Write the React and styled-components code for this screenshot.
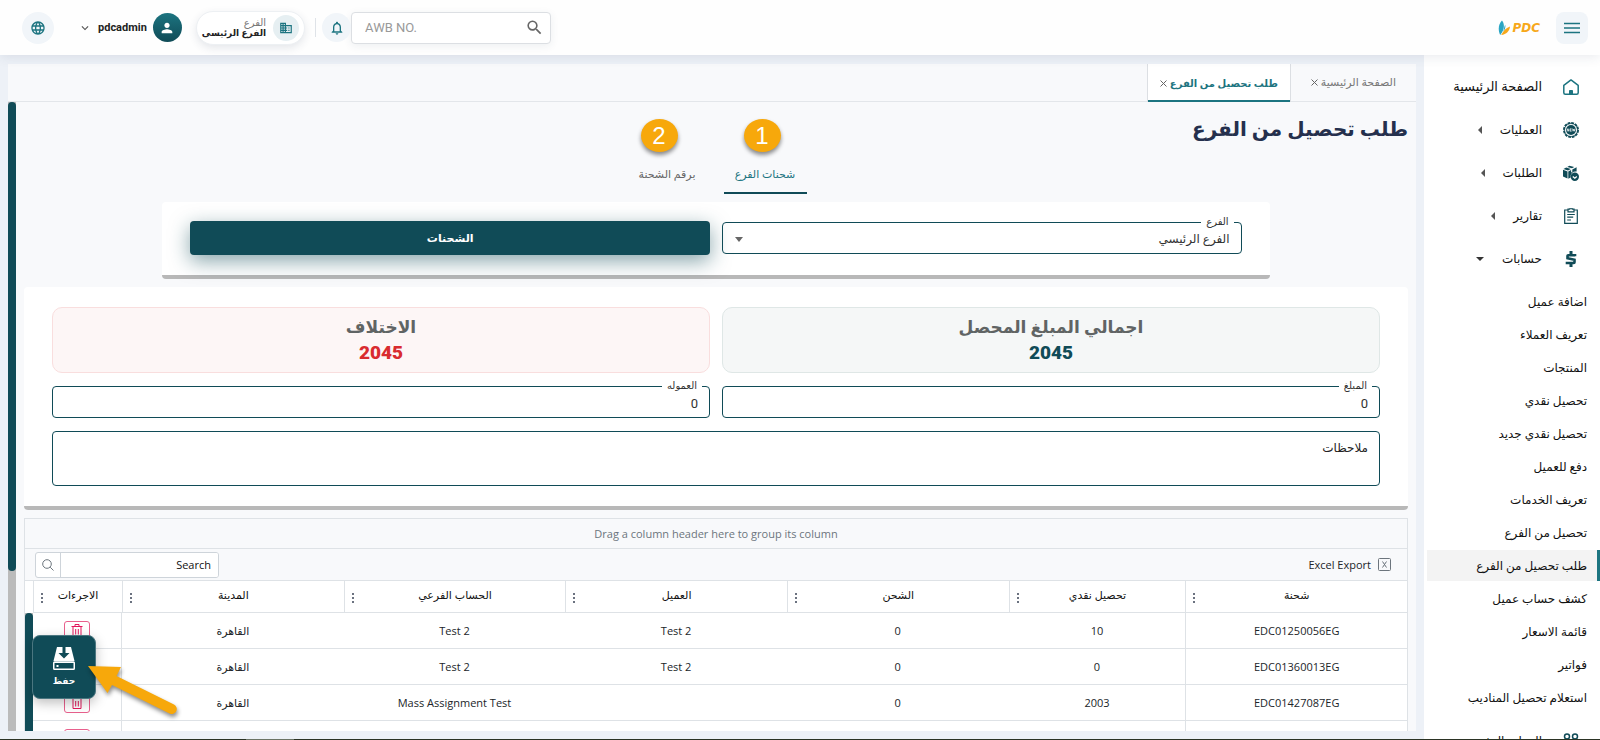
import React from "react";
import styled, { createGlobalStyle, css } from "styled-components";
import {
  MdLanguage,
  MdPerson,
  MdBusiness,
  MdNotificationsNone,
  MdSearch,
  MdKeyboardArrowDown,
} from "react-icons/md";

const arabic = `Roboto, "DejaVu Sans", sans-serif`;
const gridFont = `"Open Sans", "DejaVu Sans", sans-serif`;
const primary = "#104b57";
const accent = "#1c7480";
const line = "#dee2e6";

const GlobalStyle = createGlobalStyle`
  *, *::before, *::after { box-sizing: border-box; }
  body { margin: 0; background: #edf1f7; font-family: ${arabic}; color: #212529; }
  button, input, select, textarea { font-family: inherit; color: inherit; margin: 0; }
  a { color: inherit; text-decoration: none; }
`;

/* ---------- shell ---------- */

const Shell = styled.div`
  height: 100vh;
  display: flex;
  flex-direction: column;
  overflow: hidden;
`;

const Body = styled.div`
  flex: 1;
  min-height: 0;
  display: flex;
`;

const TaskStrip = styled.footer`
  height: 1px;
  flex: none;
  background: linear-gradient(90deg, #2b3324 0 15.4%, #6b7465 15.4% 18.4%, #2b3324 18.4%);
`;

/* ---------- top bar ---------- */

const TopBar = styled.header`
  flex: none;
  height: 55px;
  padding: 0 12px 0 22px;
  display: flex;
  align-items: center;
  background: #fefefe;
  box-shadow: 0 1px 12px rgba(40, 60, 90, 0.12);
  z-index: 2;
`;

const SquareButton = styled.button`
  width: 32px;
  height: 32px;
  padding: 0;
  border: 0;
  border-radius: 8px;
  background: #f1f5f9;
  color: ${accent};
  display: grid;
  place-items: center;
`;

const RoundButton = styled(SquareButton)`
  width: ${(p) => p.$size}px;
  height: ${(p) => p.$size}px;
  border-radius: 50%;
`;

const Logo = styled.a`
  display: flex;
  align-items: center;
  gap: 1px;
  margin-right: 16px;
  direction: ltr;
  color: #f7a81b;
  font: italic bold 12px/16px "DejaVu Sans", sans-serif;
`;

const Spacer = styled.div`
  flex: 1;
`;

const SearchBox = styled.label`
  width: 200px;
  height: 32px;
  padding: 0 6px 0 13px;
  display: flex;
  align-items: center;
  direction: ltr;
  border: 1px solid #dcdfe3;
  border-radius: 4px;
  background: #fff;
  box-shadow: 0 2px 8px rgba(40, 60, 90, 0.08);
  color: #666;

  input {
    flex: 1;
    min-width: 0;
    padding: 0;
    border: 0;
    outline: 0;
    background: none;
    font-size: 13px;
  }
  input::placeholder { color: #999; opacity: 1; }
`;

const Divider = styled.span`
  width: 1px;
  height: 19px;
  margin: 0 6px 0 10px;
  background: #dfe3e8;
`;

const BranchPill = styled.button`
  height: 34px;
  padding: 0 5px;
  display: flex;
  align-items: center;
  gap: 7px;
  border: 1px solid #edf0f3;
  border-radius: 17px;
  background: #fff;
  box-shadow: 0 3px 8px rgba(40, 60, 90, 0.12);
  text-align: right;
`;

const PillIcon = styled.span`
  width: 26px;
  height: 26px;
  border-radius: 50%;
  background: #e6eff2;
  color: ${accent};
  display: grid;
  place-items: center;
`;

const PillText = styled.span`
  display: grid;
  font-size: 10px;
  line-height: 11px;
  color: #777;
  white-space: nowrap;

  strong {
    font-size: 9px;
    color: #222;
  }
`;

const UserButton = styled.button`
  margin-inline: 14px 24px;
  padding: 0;
  border: 0;
  background: none;
  display: flex;
  align-items: center;
  gap: 6px;
  font-size: 11px;
  font-weight: 700;
  color: #222;

  svg { color: #555; }
`;

const Avatar = styled.span`
  width: 29px;
  height: 29px;
  border-radius: 50%;
  background: linear-gradient(${accent}, ${primary});
  display: grid;
  place-items: center;

  svg { color: #fff; }
`;

/* ---------- sidebar ---------- */

const Sidebar = styled.nav`
  width: 176px;
  flex: none;
  padding-top: 10px;
  overflow: hidden;
  background: #fff;
`;

const MenuItem = styled.a`
  height: 43px;
  padding-inline-start: 21px;
  display: flex;
  align-items: center;
  font-size: ${(p) => (p.$large ? 13 : 12)}px;
  line-height: 20px;
  color: #111;
  white-space: nowrap;
`;

const MenuIcon = styled.span`
  width: 16px;
  height: 16px;
  margin-inline-end: 21px;
  color: ${primary};

  svg { display: block; }
`;

const Caret = styled.span`
  margin-inline-start: 18px;
  border: 4px solid transparent;
  ${(p) =>
    p.$open
      ? css`border-top-color: #333; border-bottom: 0;`
      : css`border-right-color: #555; border-left: 0;`}
`;

const SubMenu = styled.div`
  padding: 6px 0 4px;
`;

const SubItem = styled.a`
  height: 31px;
  margin-bottom: 2px;
  margin-inline-end: 3px;
  padding-inline-start: 13px;
  display: flex;
  align-items: center;
  font-size: 12px;
  color: #111;
  white-space: nowrap;
  ${(p) =>
    p.$active &&
    css`
      padding-inline-start: 10px;
      border-inline-start: 3px solid ${accent};
      background: #f3f3f3;
    `}
`;

/* ---------- workspace ---------- */

const Workspace = styled.main`
  flex: 1;
  min-width: 0;
  margin: 9px 8px 8px;
  display: flex;
  flex-direction: column;
  position: relative;
  background: #f8f9fb;
`;

const PageTabs = styled.div`
  flex: none;
  height: 38px;
  display: flex;
  border-bottom: 1px solid #e3e6ea;
`;

const PageTab = styled.div`
  padding: 0 20px;
  display: flex;
  align-items: center;
  gap: 3px;
  font-size: 11px;
  color: #777;
  white-space: nowrap;
  ${(p) =>
    p.$active &&
    css`
      margin-bottom: -1px;
      padding: 0 12px;
      border: solid #dcdfe3;
      border-width: 0 1px;
      box-shadow: inset 0 -2px ${accent};
      background: #fff;
      color: ${accent};
      font-size: 10px;
      font-weight: 700;
    `}

  button {
    padding: 0;
    border: 0;
    background: none;
    display: flex;
    color: #666;
  }
`;

const Scroller = styled.div`
  flex: 1;
  min-height: 0;
  display: flex;
`;

const Page = styled.div`
  flex: 1;
  min-width: 0;
  overflow: hidden;
  padding: 0 8px;
`;

const ScrollTrack = styled.div`
  width: 8px;
  flex: none;
  background: #bbb;

  &::before {
    content: "";
    display: block;
    height: ${(p) => p.$thumb};
    border-radius: 4px;
    background: ${primary};
  }
`;

const Title = styled.h1`
  margin: 0;
  height: 54px;
  font-size: 20px;
  line-height: 54px;
  color: #25304d;
`;

const ModeTabs = styled.div`
  display: flex;
  justify-content: center;
  gap: 15px;
`;

const ModeTab = styled.button`
  position: relative;
  width: 83px;
  height: 38px;
  padding: 0;
  border: 0;
  border-bottom: 2px solid ${(p) => (p.$active ? primary : "transparent")};
  background: none;
  font-size: 11px;
  color: ${(p) => (p.$active ? accent : "#666")};
  white-space: nowrap;
`;

const Callout = styled.span`
  position: absolute;
  top: -37px;
  right: ${(p) => p.$right}px;
  width: 37px;
  height: 33px;
  border-radius: 50%;
  background: #f7a80b;
  box-shadow: 0 3px 4px rgba(0, 0, 0, 0.45);
  color: #fff;
  font: 24px/33px "Liberation Sans", sans-serif;
  text-align: center;
`;

const Card = styled.section`
  padding: 20px 28px;
  border-bottom: 4px solid #b8b8b8;
  border-radius: 4px;
  background: #fff;
  display: grid;
  grid-template-columns: 1fr 1fr;
  align-items: center;
  gap: 13px 12px;
`;

const FilterCard = styled(Card)`
  width: 80%;
  margin: 8px auto;
  padding-top: 19px;
`;

const Field = styled.div`
  position: relative;
  height: 32px;
  border: 1px solid ${primary};
  border-radius: 4px;
  color: #333;

  label {
    position: absolute;
    top: -8px;
    right: 7px;
    padding: 0 5px;
    background: #fff;
    font-size: 10px;
    line-height: 14px;
  }

  input,
  select {
    width: 100%;
    height: 100%;
    padding: 2px 11px 0;
    border: 0;
    outline: 0;
    appearance: none;
    background: none;
    font-size: 13px;
  }

  select { font-size: 12px; }

  svg {
    position: absolute;
    left: 12px;
    top: 14px;
  }
`;

const PrimaryButton = styled.button`
  height: 34px;
  border: 0;
  border-radius: 4px;
  background: ${primary};
  box-shadow: 0 6px 20px rgba(16, 75, 87, 0.5);
  color: #fff;
  font-size: 11px;
  font-weight: 700;
`;

const tones = {
  good: { bg: "#f5f7f7", border: "#dfe7e6", value: primary },
  bad: { bg: "#fdf6f6", border: "#f9dede", value: "#d92b2f" },
};

const Summary = styled.div`
  height: 66px;
  padding-top: 7px;
  border: 1px solid ${(p) => tones[p.$tone].border};
  border-radius: 10px;
  background: ${(p) => tones[p.$tone].bg};
  text-align: center;
  font-size: 17px;
  line-height: 25px;
  font-weight: 700;
  color: #606464;

  strong {
    display: block;
    font-size: 19px;
    color: ${(p) => tones[p.$tone].value};
  }
`;

const Notes = styled.textarea`
  grid-column: 1 / -1;
  height: 55px;
  padding: 7px 11px;
  border: 1px solid ${primary};
  border-radius: 4px;
  outline: 0;
  resize: none;
  background: #fff;
  font-size: 12px;
  line-height: 18px;

  &::placeholder { color: #222; opacity: 1; }
`;

/* ---------- data grid ---------- */

const DataGrid = styled.section`
  margin-top: 8px;
  border: 1px solid ${line};
  font-family: ${gridFont};
  font-size: 11px;
`;

const GroupBar = styled.div`
  height: 30px;
  line-height: 30px;
  text-align: center;
  direction: ltr;
  color: #6c757d;
  border-bottom: 1px solid ${line};
`;

const Toolbar = styled.div`
  height: 32px;
  padding: 0 16px 0 10px;
  display: flex;
  align-items: center;
  justify-content: space-between;
  border-bottom: 1px solid ${line};
`;

const ExportButton = styled.button`
  padding: 0;
  border: 0;
  background: none;
  display: flex;
  align-items: center;
  gap: 7px;
  font-size: 11px;
`;

const GridSearch = styled.label`
  width: 184px;
  height: 26px;
  display: flex;
  border: 1px solid #ced4da;
  border-radius: 3px;
  background: #fff;
  overflow: hidden;

  input {
    flex: 1;
    min-width: 0;
    padding: 0 7px;
    border: 0;
    outline: 0;
    font-size: 11px;
  }
  input::placeholder { color: #111; opacity: 1; }

  span {
    width: 25px;
    border-inline-start: 1px solid #ced4da;
    display: grid;
    place-items: center;
    color: #6c757d;
  }
`;

const GridBody = styled.div`
  display: flex;
`;

const GridScroll = styled.div`
  width: 8px;
  flex: none;
  padding-top: 32px;
  background: #fff;

  div { height: 100%; }
`;

const Table = styled.table`
  flex: 1;
  width: 100%;
  table-layout: fixed;
  border-collapse: separate;
  border-spacing: 0;
  background: #fff;

  th, td {
    padding: 0;
    border-bottom: 1px solid ${line};
    text-align: center;
    font-weight: 400;
    white-space: nowrap;
  }
  th {
    height: 32px;
    padding-bottom: 4px;
    border-inline-end: 1px solid ${line};
    color: #111;
  }
  td { height: 36px; }
  td:first-child { border-inline-end: 1px solid ${line}; }
  td:last-child { border-inline-start: 1px solid ${line}; }
`;

const HeadCell = styled.div`
  display: grid;
  grid-template-columns: 16px 1fr 16px;
  align-items: center;
  line-height: 20px;
`;

const Dots = styled.button`
  grid-column: 3;
  padding: 6px 0 0;
  border: 0;
  background: none;
  display: grid;
  place-items: center;
  color: #6b7280;
`;

const DeleteButton = styled.button`
  width: 26px;
  height: 20px;
  padding: 0;
  border: 1px solid #e8608d;
  border-radius: 3px;
  background: #fff;
  color: #e3165b;
  display: grid;
  place-items: center;
  margin: 0 auto;
`;

const SaveButton = styled.button`
  position: absolute;
  left: 24px;
  bottom: 32px;
  width: 64px;
  height: 64px;
  padding: 3px 0 0;
  border: 1px solid #4b7680;
  border-radius: 8px;
  background: ${primary};
  box-shadow: 0 4px 12px rgba(0, 0, 0, 0.25);
  color: #fff;
  font-size: 9px;
  font-weight: 700;
  line-height: 18px;
  display: grid;
  place-content: center;
  justify-items: center;
  gap: 2px;
`;

const Pointer = styled.svg`
  position: absolute;
  left: 78px;
  bottom: 10px;
  filter: drop-shadow(1px 3px 2px rgba(0, 0, 0, 0.45));
`;

/* ---------- drawings ---------- */

const HomeIcon = () => (
  <svg width="16" height="16" viewBox="0 0 16 16" fill="none" stroke={accent} strokeWidth="1.5" strokeLinejoin="round">
    <path d="M.8 6.4 8 .9l7.200 5.500V13.700a1.500 1.500 0 0 1-1.500 1.500H2.300A1.500 1.500 0 0 1 .8 13.700Z" />
    <path d="M6 15.200v-3.400a.8.8 0 0 1 .8-.8h2.400a.8.8 0 0 1 .8.8v3.400Z" fill={accent} stroke="none" />
  </svg>
);

const BadgeIcon = () => (
  <svg width="16" height="16" viewBox="0 0 16 16" fill="none" stroke="currentColor">
    <circle cx="8" cy="8" r="7.100" strokeWidth="1.800" strokeDasharray="2.800 .917" />
    <circle cx="8" cy="8" r="6.500" strokeWidth=".8" />
    <circle cx="8" cy="8" r="5" fill="currentColor" stroke="none" />
    <path d="M4.300 9.400V6.700l1.400 2.600V6.600M8.600 6.800H7.100v2.400h1.500M7.100 8h1.300M9.500 6.600l.6 2.600.7-2.200.7 2.200.6-2.600" stroke="#fff" strokeWidth=".7" />
  </svg>
);

const BoxesIcon = () => (
  <svg width="16" height="16" viewBox="0 0 16 16" fill="currentColor">
    <path d="M0 4.800 4.500 6.400v7.200L0 11.600ZM.5 3.900 3.200 2.500l4.600 1.400-2.800 1.700ZM4.200 2 6.400.8l4.800 1.300L9 3.300ZM5.300 6.500l2.800-1.600v2.600l1.200-.6V4.400L13.600 2.300v4.300a5 5 0 0 0-6 5.900l-2.300 1.200Z" />
    <circle cx="11.800" cy="11.800" r="4.200" />
    <path d="m9.800 11.400 2 1.800 2-1.800" fill="none" stroke="#fff" strokeWidth="1.300" />
  </svg>
);

const ClipboardIcon = () => (
  <svg width="16" height="16" viewBox="0 0 16 16" fill="none" stroke="currentColor" strokeWidth="1.200">
    <path d="M5 2H1.700v13.300h12.600V2H11" />
    <path d="M5 1.200h1.800a1.200 1.200 0 0 1 2.400 0H11v2.600H5Z" />
    <path d="M4.200 6.500h7.600M4.200 9.200h6M4.200 12h3.800" />
  </svg>
);

const DollarIcon = () => (
  <svg width="16" height="16" viewBox="0 0 16 16" fill="none" stroke="currentColor">
    <path d="M12 5.300V4.200H5.200a.7.7 0 0 0-.7.700V7.300l7 1.400v2.600a.7.7 0 0 1-.7.700H4v-1.200" strokeWidth="2.600" />
    <path d="M8 0v3M8 13v3" strokeWidth="3" />
  </svg>
);

const PeopleIcon = () => (
  <svg width="16" height="16" viewBox="0 0 16 16" fill="none" stroke="currentColor" strokeWidth="1.500">
    <circle cx="4" cy="3.500" r="2.500" />
    <circle cx="12" cy="3.500" r="2.500" />
    <path d="M.8 15v-3a3 3 0 0 1 6.400 0v3M8.800 15v-3a3 3 0 0 1 6.400 0v3" />
  </svg>
);

const MenuLines = () => (
  <svg width="16" height="12" viewBox="0 0 16 12" stroke="currentColor" strokeWidth="1.500">
    <path d="M0 1.500h16M0 6h16M0 10.500h16" />
  </svg>
);

const LogoMark = () => (
  <svg width="13" height="16" viewBox="0 0 13 16">
    <path d="M4 .5C7 4 6.500 10 2.200 15-.2 10 .3 4 4 .5Z" fill="#2ba6c4" />
    <path d="M12 6.500C11.500 11 8.500 14.500 3.200 15 5 11.500 7.500 8 12 6.500Z" fill="#f7a81b" />
    <path d="M7.200 4.800c.6 2-.2 5-1.800 6.800.4-2.400.8-4.800 1.800-6.800Z" fill="#2ba6c4" />
  </svg>
);

const CloseIcon = () => (
  <svg width="7" height="7" viewBox="0 0 7 7" stroke="currentColor" strokeWidth="1">
    <path d="m.5.5 6 6M6.500.5l-6 6" />
  </svg>
);

const DotsIcon = () => (
  <svg width="2" height="10" viewBox="0 0 2 10" fill="currentColor">
    <path d="M0 0h2v2H0zM0 4h2v2H0zM0 8h2v2H0z" />
  </svg>
);

const TrashIcon = () => (
  <svg width="12" height="13" viewBox="0 0 12 13" fill="none" stroke="currentColor">
    <path d="M.5 2.500h11M4 2.500v-2h4v2M2 2.500v10h8v-10M4.700 5v5.500M7.300 5v5.500" />
  </svg>
);

const ExcelIcon = () => (
  <svg width="13" height="13" viewBox="0 0 13 13" fill="none" stroke="#6c757d">
    <rect x=".5" y=".5" width="12" height="12" rx="1" />
    <path d="m4.500 3.500 4 6M8.500 3.500l-4 6" />
  </svg>
);

const LoupeIcon = () => (
  <svg width="12" height="12" viewBox="0 0 12 12" fill="none" stroke="currentColor">
    <circle cx="5" cy="5" r="4.300" />
    <path d="m8.200 8.200 3.300 3.300" />
  </svg>
);

const SaveIcon = () => (
  <svg width="22" height="23" viewBox="0 0 22 23">
    <path d="M4 0h14l3.500 14H.5Z" fill="#fff" />
    <path d="M9.500 0h3v6h4L11 11.500 5.500 6h4Z" fill={primary} />
    <path fill="#fff" fillRule="evenodd" d="M1.500 14.200h19a1.500 1.500 0 0 1 1.500 1.500v5.800a1.500 1.500 0 0 1-1.500 1.500h-19A1.500 1.500 0 0 1 0 21.500v-5.800a1.500 1.500 0 0 1 1.500-1.500ZM1.500 16v5.500h19v-5.500ZM3.500 18h2v2h-2Z" />
  </svg>
);

/* ---------- data ---------- */

const menu = [
  { label: "الصفحة الرئيسية", Icon: HomeIcon, large: true },
  { label: "العمليات", Icon: BadgeIcon, caret: true },
  { label: "الطلبات", Icon: BoxesIcon, caret: true },
  { label: "تقارير", Icon: ClipboardIcon, caret: true },
  { label: "حسابات", Icon: DollarIcon, caret: true, open: true },
];

const accounts = [
  "اضافة عميل",
  "تعريف العملاء",
  "المنتجات",
  "تحصيل نقدي",
  "تحصيل نقدي جديد",
  "دفع للعميل",
  "تعريف الخدمات",
  "تحصيل من الفرع",
  "طلب تحصيل من الفرع",
  "كشف حساب عميل",
  "قائمة الاسعار",
  "فواتير",
  "استعلام تحصيل المناديب",
];

const columns = [
  ["شحنة", "16.13%"],
  ["تحصيل نقدي", "12.87%"],
  ["الشحن", "16.13%"],
  ["العميل", "16.13%"],
  ["الحساب الفرعي", "16.13%"],
  ["المدينة", "16.13%"],
  ["الاجرءات", "6.48%"],
];

const rows = [
  ["EDC01250056EG", "10", "0", "Test 2", "Test 2", "القاهرة"],
  ["EDC01360013EG", "0", "0", "Test 2", "Test 2", "القاهرة"],
  ["EDC01427087EG", "2003", "0", "", "Mass Assignment Test", "القاهرة"],
  ["", "", "", "", "", ""],
];

/* ---------- app ---------- */

function MenuEntry({ item }) {
  const { label, Icon, large, caret, open } = item;
  return (
    <MenuItem href="#" $large={large}>
      <MenuIcon><Icon /></MenuIcon>
      {label}
      {caret && <Caret $open={open} />}
    </MenuItem>
  );
}

export default function App() {
  return (
    <Shell dir="rtl" lang="ar">
      <GlobalStyle />
      <TopBar>
        <SquareButton aria-label="القائمة"><MenuLines /></SquareButton>
        <Logo href="#"><LogoMark />PDC</Logo>
        <Spacer />
        <SearchBox>
          <input placeholder="AWB NO." aria-label="AWB NO." />
          <MdSearch size={19} />
        </SearchBox>
        <RoundButton $size={29} aria-label="الاشعارات"><MdNotificationsNone size={16} /></RoundButton>
        <Divider />
        <BranchPill>
          <PillIcon><MdBusiness size={14} /></PillIcon>
          <PillText>الفرع<strong>الفرع الرئيسى</strong></PillText>
        </BranchPill>
        <UserButton>
          <Avatar><MdPerson size={16} /></Avatar>
          pdcadmin
          <MdKeyboardArrowDown size={14} />
        </UserButton>
        <RoundButton $size={32} aria-label="اللغة"><MdLanguage size={16} /></RoundButton>
      </TopBar>

      <Body>
        <Sidebar>
          {menu.map((item) => <MenuEntry key={item.label} item={item} />)}
          <SubMenu>
            {accounts.map((label, i) => (
              <SubItem key={label} href="#" $active={i === 8}>{label}</SubItem>
            ))}
          </SubMenu>
          <MenuEntry item={{ label: "الموارد البشرية", Icon: PeopleIcon }} />
        </Sidebar>

        <Workspace>
          <PageTabs>
            <PageTab>
              الصفحة الرئيسية
              <button aria-label="اغلاق"><CloseIcon /></button>
            </PageTab>
            <PageTab $active>
              طلب تحصيل من الفرع
              <button aria-label="اغلاق"><CloseIcon /></button>
            </PageTab>
          </PageTabs>

          <Scroller>
            <Page>
              <Title>طلب تحصيل من الفرع</Title>
              <ModeTabs role="tablist">
                <ModeTab role="tab" aria-selected="true" $active>
                  شحنات الفرع
                  <Callout $right={26}>1</Callout>
                </ModeTab>
                <ModeTab role="tab" aria-selected="false">
                  برقم الشحنة
                  <Callout $right={31}>2</Callout>
                </ModeTab>
              </ModeTabs>

              <FilterCard>
                <Field>
                  <label htmlFor="branch">الفرع</label>
                  <select id="branch"><option>الفرع الرئيسي</option></select>
                  <svg width="8" height="5" viewBox="0 0 8 5"><path d="M0 0h8L4 5Z" fill="#666" /></svg>
                </Field>
                <PrimaryButton>الشحنات</PrimaryButton>
              </FilterCard>

              <Card>
                <Summary $tone="good">اجمالي المبلغ المحصل<strong>2045</strong></Summary>
                <Summary $tone="bad">الاختلاف<strong>2045</strong></Summary>
                <Field>
                  <label htmlFor="amount">المبلغ</label>
                  <input id="amount" defaultValue="0" />
                </Field>
                <Field>
                  <label htmlFor="fee">العموله</label>
                  <input id="fee" defaultValue="0" />
                </Field>
                <Notes placeholder="ملاحظات" aria-label="ملاحظات" />
              </Card>

              <DataGrid>
                <GroupBar>Drag a column header here to group its column</GroupBar>
                <Toolbar>
                  <ExportButton><ExcelIcon />Excel Export</ExportButton>
                  <GridSearch>
                    <input placeholder="Search" aria-label="Search" />
                    <span><LoupeIcon /></span>
                  </GridSearch>
                </Toolbar>
                <GridBody>
                  <Table>
                    <colgroup>
                      {columns.map(([name, width]) => <col key={name} width={width} />)}
                    </colgroup>
                    <thead>
                      <tr>
                        {columns.map(([name]) => (
                          <th key={name}>
                            <HeadCell>
                              <span />
                              {name}
                              <Dots aria-label="خيارات"><DotsIcon /></Dots>
                            </HeadCell>
                          </th>
                        ))}
                      </tr>
                    </thead>
                    <tbody>
                      {rows.map((cells, r) => (
                        <tr key={r}>
                          {cells.map((cell, c) => <td key={c}>{cell}</td>)}
                          <td><DeleteButton aria-label="حذف"><TrashIcon /></DeleteButton></td>
                        </tr>
                      ))}
                    </tbody>
                  </Table>
                  <GridScroll><ScrollTrack $thumb="100%" /></GridScroll>
                </GridBody>
              </DataGrid>
            </Page>
            <ScrollTrack $thumb="74.5%" />
          </Scroller>

          <SaveButton><SaveIcon />حفظ</SaveButton>
          <Pointer width="92" height="56" viewBox="0 0 92 56" aria-hidden="true">
            <path d="M2 1 35 2 30.500 11 88 39.500a5 5 0 0 1-4.500 9L26 20 21.500 28Z" fill="#f7a80b" />
          </Pointer>
        </Workspace>
      </Body>
      <TaskStrip />
    </Shell>
  );
}
